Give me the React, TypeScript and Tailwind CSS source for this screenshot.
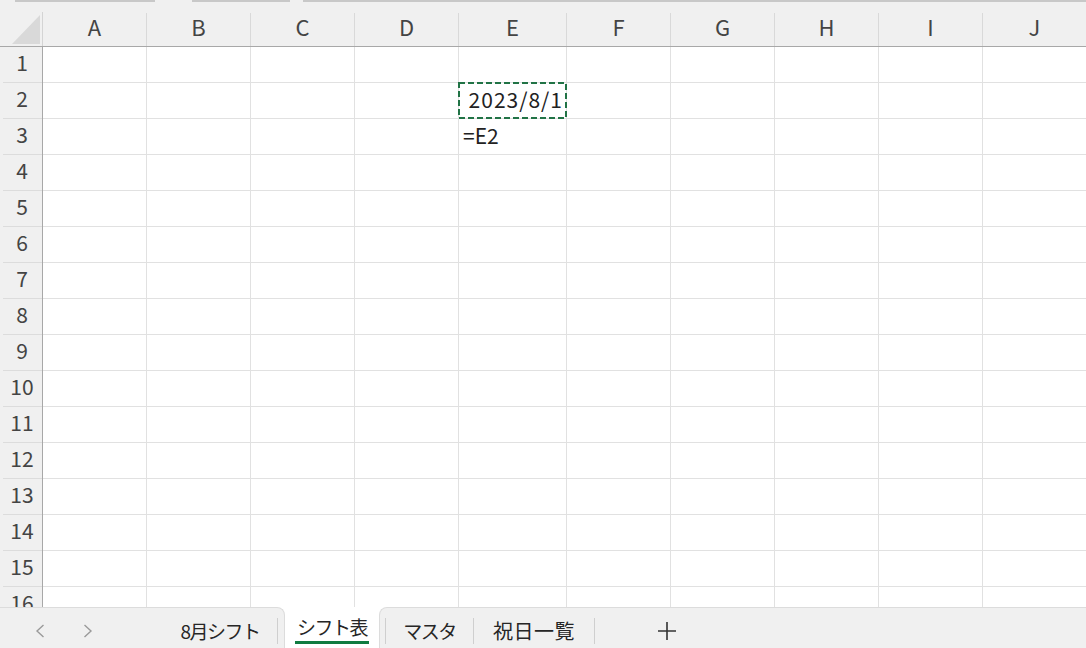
const columns = [
  { name: 'A', w: 'w-[104px]' },
  { name: 'B', w: 'w-[104px]' },
  { name: 'C', w: 'w-[104px]' },
  { name: 'D', w: 'w-[104px]' },
  { name: 'E', w: 'w-[108px]' },
  { name: 'F', w: 'w-[104px]' },
  { name: 'G', w: 'w-[104px]' },
  { name: 'H', w: 'w-[104px]' },
  { name: 'I', w: 'w-[104px]' },
  { name: 'J', w: 'w-[104px]' },
]

const rows = Array.from({ length: 16 }, (_, i) => i + 1)

function Chevron({ dir }: { dir: 'left' | 'right' }) {
  return (
    <svg width="10" height="14" viewBox="0 0 10 14" fill="none">
      <path
        d={dir === 'left' ? 'M8.5 1 L2 7 L8.5 13' : 'M1.5 1 L8 7 L1.5 13'}
        stroke="#9a9a9a"
        strokeWidth="1.4"
      />
    </svg>
  )
}

function Sep() {
  return <div className="w-px h-[26px] bg-[#cfcfcf] shrink-0" />
}

function Cell({ row, col }: { row: number; col: number }) {
  const c = columns[col]
  if (row === 2 && c.name === 'E') {
    return (
      <div className={`${c.w} relative h-full border-r border-[#e1e1e1] flex items-center justify-end pr-[3px] pb-[2px] shrink-0`}>
        <span className="tracking-[1px]">2023/8/1</span>
        <svg className="absolute left-[-1px] top-[-1px]" width="109" height="37" viewBox="0 0 109 37">
          <rect x="1" y="1" width="107" height="35" fill="none" stroke="#217346" strokeWidth="2" strokeDasharray="6 3" />
        </svg>
      </div>
    )
  }
  if (row === 3 && c.name === 'E') {
    return (
      <div className={`${c.w} h-full border-r border-[#e1e1e1] flex items-center pl-[4px] pb-[2px] shrink-0`}>
        <span>=E2</span>
      </div>
    )
  }
  return <div className={`${c.w} h-full border-r border-[#e1e1e1] shrink-0`} />
}

export default function App() {
  return (
    <div className="w-[1086px] h-[648px] flex flex-col bg-white overflow-hidden font-['Noto_Sans_CJK_JP',sans-serif] text-[#222]">
      {/* top edge */}
      <div className="h-[2px] flex bg-[#f0f0f0] shrink-0">
        <div className="ml-[15px] w-[140px] bg-[#c8c8c8]" />
        <div className="ml-[37px] w-[98px] bg-[#c8c8c8]" />
        <div className="ml-[13px] flex-1 bg-[#c8c8c8]" />
      </div>

      {/* column header */}
      <div className="h-[45px] flex bg-[#f0f0f0] border-b border-[#a8a8a8] shrink-0 text-[22px] text-[#444]">
        <div className="w-[43px] flex items-end shrink-0">
          <div className="flex-1 h-full flex items-end pl-[12px] pb-[2px]">
            <svg width="28" height="29" viewBox="0 0 28 29">
              <polygon points="28,0 28,29 0,29" fill="#d9d9d9" />
            </svg>
          </div>
          <div className="w-px h-[34px] bg-[#d4d4d4]" />
        </div>
        {columns.map((c) => (
          <div key={c.name} className={`${c.w} flex items-end shrink-0`}>
            <div className="flex-1 h-full flex items-center justify-center pt-[5px]">{c.name}</div>
            <div className="w-px h-[33px] bg-[#d9d9d9]" />
          </div>
        ))}
      </div>

      {/* grid */}
      <div className="flex-1 overflow-hidden text-[21px]">
        {rows.map((r) => (
          <div key={r} className="h-[36px] flex">
            <div className="w-[43px] h-full flex bg-[#f0f0f0] border-r border-[#a8a8a8] shrink-0">
              <div className="flex-1 ml-[3px] border-b border-[#dcdcdc] flex items-center justify-center pr-[1px] pb-[4px] text-[#444] text-[21px]">
                {r}
              </div>
            </div>
            <div className="flex h-full border-b border-[#e1e1e1]">
              {columns.map((_, ci) => (
                <Cell key={ci} row={r} col={ci} />
              ))}
            </div>
          </div>
        ))}
      </div>

      {/* sheet tabs */}
      <div className="h-[41px] flex shrink-0 text-[19px] tracking-[-1.5px] text-[#262626]">
        <div className="w-[285px] h-full flex items-center pt-[6px] bg-[#f0f0f0] border-t border-r border-[#dcdcdc] rounded-tr-[8px] shrink-0">
          <div className="ml-[35px]"><Chevron dir="left" /></div>
          <div className="ml-[38px]"><Chevron dir="right" /></div>
          <div className="ml-auto w-[114px] text-center">8月シフト</div>
          <Sep />
          <div className="w-[6px]" />
        </div>
        <div className="w-[94px] h-full flex justify-center pt-[8px] bg-white shrink-0">
          <div className="h-[29px] px-[2px] border-b-[3px] border-[#107c41] leading-[24px]">シフト表</div>
        </div>
        <div className="flex-1 h-full flex items-center pt-[6px] bg-[#f0f0f0] border-t border-l border-[#dcdcdc] rounded-tl-[8px]">
          <div className="w-[5px]" />
          <Sep />
          <div className="w-[87px] text-center">マスタ</div>
          <Sep />
          <div className="w-[120px] text-center text-[20px] tracking-[0.5px]">祝日一覧</div>
          <Sep />
          <div className="ml-[63px]">
            <svg width="18" height="18" viewBox="0 0 18 18">
              <path d="M9 0 V18 M0 9 H18" stroke="#333" strokeWidth="1.6" />
            </svg>
          </div>
        </div>
      </div>
    </div>
  )
}
